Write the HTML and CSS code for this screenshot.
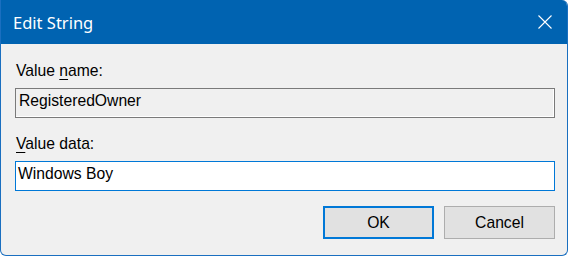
FILE: index.html
```html
<!DOCTYPE html>
<html>
<head>
<meta charset="utf-8">
<link rel="stylesheet" href="styles.css">
</head>
<body>
<div class="window">
  <div class="titlebar">
    <span class="title">Edit String</span>
    <svg class="close" width="14" height="14" viewBox="0 0 14 14"><path d="M0.5 0.5 L13.5 13.5 M13.5 0.5 L0.5 13.5" stroke="#ffffff" stroke-width="1.1" fill="none"/></svg>
  </div>
  <div class="content">
    <div class="label">Value <u>n</u>ame:</div>
    <div class="field readonly">RegisteredOwner</div>
    <div class="label second"><u>V</u>alue data:</div>
    <div class="field active">Windows Boy</div>
    <div class="buttons">
      <button class="btn default">OK</button>
      <button class="btn">Cancel</button>
    </div>
  </div>
</div>
</body>
</html>
```
FILE: styles.css
```css
html, body {
  margin: 0;
  padding: 0;
  background: #ffffff;
}
body {
  width: 569px;
  height: 256px;
  overflow: hidden;
}
.window {
  width: 568px;
  height: 256px;
  box-sizing: border-box;
  border: 1px solid #1a6fc0;
  border-top: 0;
  border-radius: 0 6px 6px 6px;
  background: #f0f0f0;
  overflow: hidden;
}
.titlebar {
  height: 44px;
  box-sizing: border-box;
  background: #0063b1;
  display: flex;
  justify-content: space-between;
  align-items: flex-start;
  padding: 12px 15px 0 12px;
}
.title {
  font-family: "Noto Sans", "Open Sans", sans-serif;
  font-size: 16.5px;
  line-height: 22px;
  color: #ffffff;
}
.close {
  margin-top: 3px;
  display: block;
}
.content {
  padding: 18px 12px 0 14px;
  font-family: "Liberation Sans", Arial, sans-serif;
  font-size: 15.7px;
  color: #000000;
}
.label {
  line-height: 17px;
  height: 17px;
  padding-left: 1px;
}
.label u {
  text-decoration: underline;
  text-decoration-thickness: 1px;
  text-underline-offset: 3px;
}
.label.second {
  margin-top: 17px;
}
.field {
  margin-top: 9px;
  height: 30px;
  box-sizing: border-box;
  border: 1px solid #7a7a7a;
  padding: 3px 3px 0 3px;
  line-height: 17px;
}
.field.readonly {
  background: #f0f0f0;
  box-shadow: inset -1px -1px 0 #ffffff;
}
.field.active {
  background: #ffffff;
  border-color: #0078d7;
  padding-left: 2px;
}
.buttons {
  margin-top: 15px;
  display: flex;
  justify-content: flex-end;
  gap: 10px;
}
.btn {
  width: 111px;
  height: 33px;
  box-sizing: border-box;
  background: #e1e1e1;
  border: 1px solid #adadad;
  font-family: "Liberation Sans", Arial, sans-serif;
  font-size: 15.7px;
  color: #000000;
  padding: 0;
  margin: 0;
}
.btn.default {
  border: 2px solid #0078d7;
}
```
